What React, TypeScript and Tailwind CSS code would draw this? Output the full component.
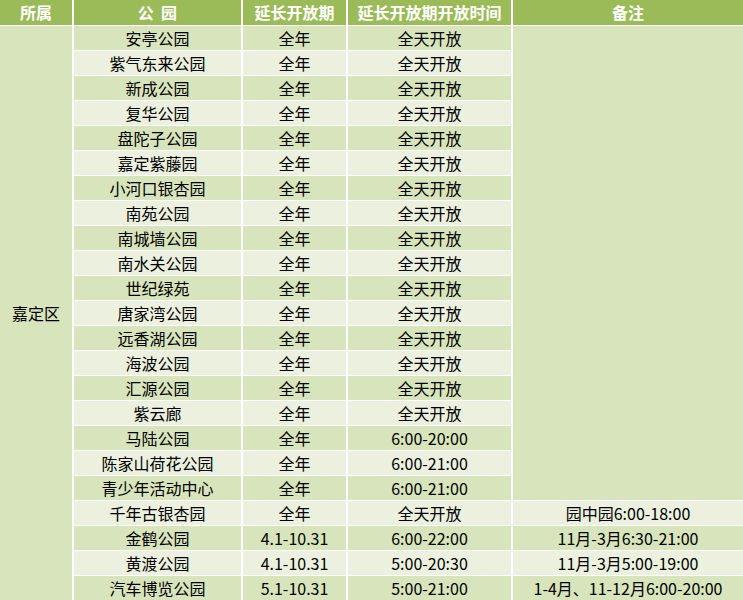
import React from 'react';

type Park = { name: string; period: string; hours: string; note?: string };

const parks: Park[] = [
  { name: '安亭公园', period: '全年', hours: '全天开放' },
  { name: '紫气东来公园', period: '全年', hours: '全天开放' },
  { name: '新成公园', period: '全年', hours: '全天开放' },
  { name: '复华公园', period: '全年', hours: '全天开放' },
  { name: '盘陀子公园', period: '全年', hours: '全天开放' },
  { name: '嘉定紫藤园', period: '全年', hours: '全天开放' },
  { name: '小河口银杏园', period: '全年', hours: '全天开放' },
  { name: '南苑公园', period: '全年', hours: '全天开放' },
  { name: '南城墙公园', period: '全年', hours: '全天开放' },
  { name: '南水关公园', period: '全年', hours: '全天开放' },
  { name: '世纪绿苑', period: '全年', hours: '全天开放' },
  { name: '唐家湾公园', period: '全年', hours: '全天开放' },
  { name: '远香湖公园', period: '全年', hours: '全天开放' },
  { name: '海波公园', period: '全年', hours: '全天开放' },
  { name: '汇源公园', period: '全年', hours: '全天开放' },
  { name: '紫云廊', period: '全年', hours: '全天开放' },
  { name: '马陆公园', period: '全年', hours: '6:00-20:00' },
  { name: '陈家山荷花公园', period: '全年', hours: '6:00-21:00' },
  { name: '青少年活动中心', period: '全年', hours: '6:00-21:00' },
  { name: '千年古银杏园', period: '全年', hours: '全天开放', note: '园中园6:00-18:00' },
  { name: '金鹤公园', period: '4.1-10.31', hours: '6:00-22:00', note: '11月-3月6:30-21:00' },
  { name: '黄渡公园', period: '4.1-10.31', hours: '5:00-20:30', note: '11月-3月5:00-19:00' },
  { name: '汽车博览公园', period: '5.1-10.31', hours: '5:00-21:00', note: '1-4月、11-12月6:00-20:00' },
];

const headers = ['所属', '公  园', '延长开放期', '延长开放期开放时间', '备注'];

export default function App() {
  return (
    <div className="w-[743px] h-[600px] overflow-hidden bg-white font-['Noto_Sans_CJK_SC','Microsoft_YaHei',sans-serif] text-[16px] text-black">
      <div className="grid grid-cols-[72px_167px_103px_163px_1fr] grid-rows-[25px_repeat(23,24px)] gap-x-[2px] gap-y-px">
        {headers.map((h) => (
          <div key={h} className="flex items-center justify-center bg-[#9bbb59] pb-[2px] font-bold text-white leading-none whitespace-pre">
            {h}
          </div>
        ))}
        <div className="row-span-23 flex items-center justify-center bg-[#d8e4bc] pb-px leading-none">嘉定区</div>
        {parks.map((p, i) => {
          const bg = i % 2 === 0 ? 'bg-[#d8e4bc]' : 'bg-[#ebf1de]';
          const cell = `flex items-center justify-center pb-px leading-none ${bg}`;
          return (
            <React.Fragment key={p.name}>
              <div className={cell}>{p.name}</div>
              <div className={cell}>{p.period}</div>
              <div className={cell}>{p.hours}</div>
              {i === 0 && <div className="row-span-19 bg-[#d8e4bc]" />}
              {p.note && <div className={cell}>{p.note}</div>}
            </React.Fragment>
          );
        })}
      </div>
    </div>
  );
}
